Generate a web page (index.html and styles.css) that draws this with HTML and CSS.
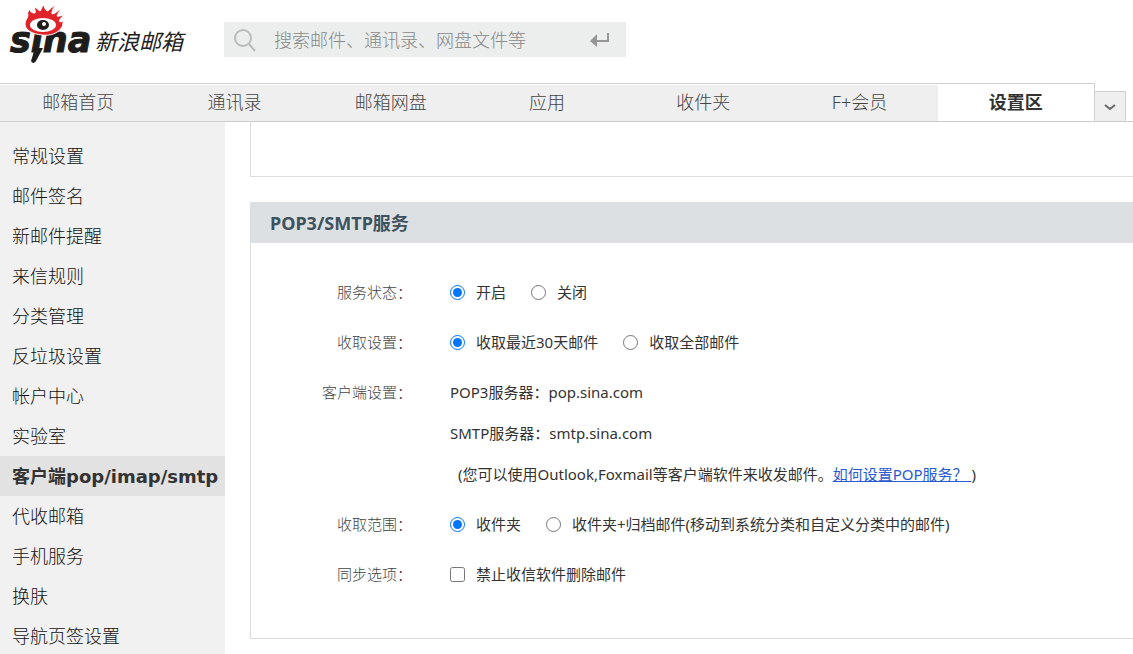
FILE: index.html
```html
<!DOCTYPE html>
<html lang="zh-CN">
<head>
<meta charset="utf-8">
<title>新浪邮箱</title>
<link rel="stylesheet" href="styles.css">
</head>
<body>
<header class="header">
  <a class="logo" href="#" aria-label="新浪邮箱">
    <svg class="logo-mark" viewBox="0 0 82 62" aria-hidden="true">
      <text class="logo-latin" x="0" y="46">sına</text>
      <path fill="#1d1d1b" d="M25 42H33L26 55Q23 59 21 55Z"/>
      <path fill="#e1232a" stroke="#fff" stroke-width="1" d="M15 18C15 14 18 12 18 9C17 7 18 5 20 3C20 6 22 7 25 7C26 5 24 3 25 1C27 2 28 4 30 5C32 3 31 1 34 -1C34 2 36 4 37 5C40 4 41 1 46 -1C42 3 42 6 42 8C46 8 47 4 52 3C48 6 48 8 47 10C49 11 51 9 54 9C51 11 50 14 49 15C50 16 52 16 54 15C52 18 53 20 52 21C48 28 39 30 32 29C22 28 15 24 15 18Z"/>
      <ellipse cx="33" cy="19" rx="13" ry="7" fill="#fff"/>
      <ellipse cx="33" cy="19" rx="6" ry="5" fill="#1d1d1b"/>
      <circle cx="34" cy="18" r="2" fill="#fff"/>
    </svg>
    <span class="logo-name">新浪邮箱</span>
  </a>
  <form class="search">
    <svg class="search-icon" viewBox="0 0 24 24" aria-hidden="true"><circle cx="10" cy="10" r="8"/><path d="M16 16L22 23"/></svg>
    <input class="search-input" type="text" placeholder="搜索邮件、通讯录、网盘文件等" aria-label="搜索">
    <button class="search-submit" type="button" aria-label="提交搜索">
      <svg class="enter-icon" viewBox="0 0 20 16"><path fill="#969696" d="M17 1H19V10H7V15L0 9L7 2V8H17Z"/></svg>
    </button>
  </form>
</header>
<nav class="tabs">
  <div class="tab-list">
    <a class="tab" href="#">邮箱首页</a>
    <a class="tab" href="#">通讯录</a>
    <a class="tab" href="#">邮箱网盘</a>
    <a class="tab" href="#">应用</a>
    <a class="tab" href="#">收件夹</a>
    <a class="tab" href="#">F+会员</a>
    <a class="tab tab-active" href="#">设置区</a>
  </div>
  <button class="tab-more" type="button" aria-label="更多标签">
    <svg class="chevron" viewBox="0 0 12 8"><path d="M1 2L6 6L11 2"/></svg>
  </button>
</nav>
<div class="layout">
  <aside class="sidebar">
    <a class="side-item" href="#">常规设置</a>
    <a class="side-item" href="#">邮件签名</a>
    <a class="side-item" href="#">新邮件提醒</a>
    <a class="side-item" href="#">来信规则</a>
    <a class="side-item" href="#">分类管理</a>
    <a class="side-item" href="#">反垃圾设置</a>
    <a class="side-item" href="#">帐户中心</a>
    <a class="side-item" href="#">实验室</a>
    <a class="side-item side-active" href="#">客户端pop/imap/smtp</a>
    <a class="side-item" href="#">代收邮箱</a>
    <a class="side-item" href="#">手机服务</a>
    <a class="side-item" href="#">换肤</a>
    <a class="side-item" href="#">导航页签设置</a>
  </aside>
  <main class="content">
    <section class="panel-previous"></section>
    <section class="panel">
      <h2 class="panel-title">POP3/SMTP服务</h2>
      <div class="panel-body">
        <div class="row">
          <div class="row-label">服务状态：</div>
          <div class="options">
            <label class="option"><input class="choice" type="radio" name="status" checked>开启</label>
            <label class="option"><input class="choice" type="radio" name="status">关闭</label>
          </div>
        </div>
        <div class="row">
          <div class="row-label">收取设置：</div>
          <div class="options">
            <label class="option"><input class="choice" type="radio" name="period" checked>收取最近30天邮件</label>
            <label class="option"><input class="choice" type="radio" name="period">收取全部邮件</label>
          </div>
        </div>
        <div class="row">
          <div class="row-label">客户端设置：</div>
          <div class="servers">
            <div>POP3服务器：pop.sina.com</div>
            <div>SMTP服务器：smtp.sina.com</div>
            <div class="hint">(您可以使用Outlook,Foxmail等客户端软件来收发邮件。<a class="help" href="#">如何设置POP服务？&nbsp;</a>)</div>
          </div>
        </div>
        <div class="row">
          <div class="row-label">收取范围：</div>
          <div class="options">
            <label class="option"><input class="choice" type="radio" name="range" checked>收件夹</label>
            <label class="option"><input class="choice" type="radio" name="range">收件夹+归档邮件(移动到系统分类和自定义分类中的邮件)</label>
          </div>
        </div>
        <div class="row">
          <div class="row-label">同步选项：</div>
          <div class="options">
            <label class="option"><input class="choice" type="checkbox">禁止收信软件删除邮件</label>
          </div>
        </div>
      </div>
    </section>
  </main>
</div>
</body>
</html>
```

FILE: styles.css
```css
* { box-sizing: border-box; }

body {
  margin: 0;
  height: 100vh;
  overflow: hidden;
  display: flex;
  flex-direction: column;
  background: #fff;
  color: #333;
  font-family: "Noto Sans", "Noto Sans CJK SC", sans-serif;
  font-size: 15px;
}

a { color: inherit; text-decoration: none; }
button { border: 0; padding: 0; background: none; }

.header {
  flex: none;
  height: 83px;
  display: flex;
  align-items: flex-start;
  padding: 6px 0 0 10px;
}
.logo { width: 214px; display: flex; gap: 3px; color: #222; }
.logo-mark { width: 82px; height: 62px; overflow: visible; }
.logo-latin {
  font: italic bold 35px "DejaVu Sans", sans-serif;
  fill: #1d1d1b;
  stroke: #1d1d1b;
  stroke-width: 1;
}
.logo-name {
  font-family: "Noto Sans CJK SC", sans-serif;
  font-size: 22px;
  font-style: italic;
  line-height: 32px;
  padding-top: 18px;
}

.search {
  width: 402px;
  height: 35px;
  margin-top: 16px;
  padding: 0 16px 0 9px;
  display: flex;
  align-items: center;
  background: #ebeeed;
}
.search-icon { width: 24px; height: 24px; fill: none; stroke: #bbb; stroke-width: 2; }
.search-input {
  flex: 1;
  min-width: 0;
  border: 0;
  padding: 0 0 2px 17px;
  background: none;
  font: 300 18px "Noto Sans CJK SC", sans-serif;
  outline: 0;
}
.search-input::placeholder { color: #888; }
.search-submit { display: flex; }
.enter-icon { width: 20px; height: 16px; }

.tabs {
  flex: none;
  height: 39px;
  display: flex;
  align-items: flex-end;
  padding-right: 7px;
  border-bottom: 1px solid #ccc;
}
.tab-list {
  flex: 1;
  height: 38px;
  display: flex;
  border-top: 1px solid #d0d0d0;
  border-right: 1px solid #d0d0d0;
}
.tab {
  flex: 1;
  margin-top: 1px;
  text-align: center;
  font-size: 18px;
  font-weight: 300;
  line-height: 35px;
  color: #444;
  background: #efefef;
}
.tab-active { background: #fff; color: #333; font-weight: bold; }
.tab-more {
  width: 31px;
  height: 30px;
  display: flex;
  align-items: center;
  justify-content: center;
  background: #efefef;
  border: solid #d0d0d0;
  border-width: 1px 1px 0 0;
}
.chevron { width: 12px; height: 8px; fill: none; stroke: #666; stroke-width: 2; }

.layout { flex: 1; min-height: 0; display: flex; gap: 25px; }
.sidebar {
  flex: none;
  width: 225px;
  padding-top: 14px;
  overflow: hidden;
  background: #f1f1f1;
}
.side-item {
  display: block;
  padding-left: 12px;
  font-family: "DejaVu Sans", "Noto Sans CJK SC", sans-serif;
  font-size: 18px;
  font-weight: 300;
  color: #111;
  line-height: 42px;
  height: 40px;
  white-space: nowrap;
}
.side-active { background: #e2e2e2; color: #333; font-weight: bold; }

.content { flex: 1; min-width: 0; overflow: hidden; }
.panel-previous {
  height: 55px;
  margin-bottom: 25px;
  border: solid #ddd;
  border-width: 0 0 1px 1px;
}
.panel-title {
  margin: 0;
  padding-left: 20px;
  font-size: 18px;
  line-height: 42px;
  height: 41px;
  color: #3e525e;
  background: #dce0e3;
}
.panel-body {
  display: flex;
  flex-direction: column;
  gap: 9px;
  padding: 29px 0 43px;
  border: solid #ddd;
  border-width: 0 0 1px 1px;
}
.row {
  display: grid;
  grid-template-columns: 161px 1fr;
  column-gap: 38px;
  line-height: 41px;
}
.row-label { text-align: right; font-weight: 300; color: #444; }
.options { display: flex; gap: 25px; }
.option { display: flex; align-items: center; gap: 11px; white-space: nowrap; }
.choice { width: 15px; height: 15px; margin: 0; }
.hint { padding-left: 8px; }
.help { color: #2a5bd0; text-decoration: underline; }
```
